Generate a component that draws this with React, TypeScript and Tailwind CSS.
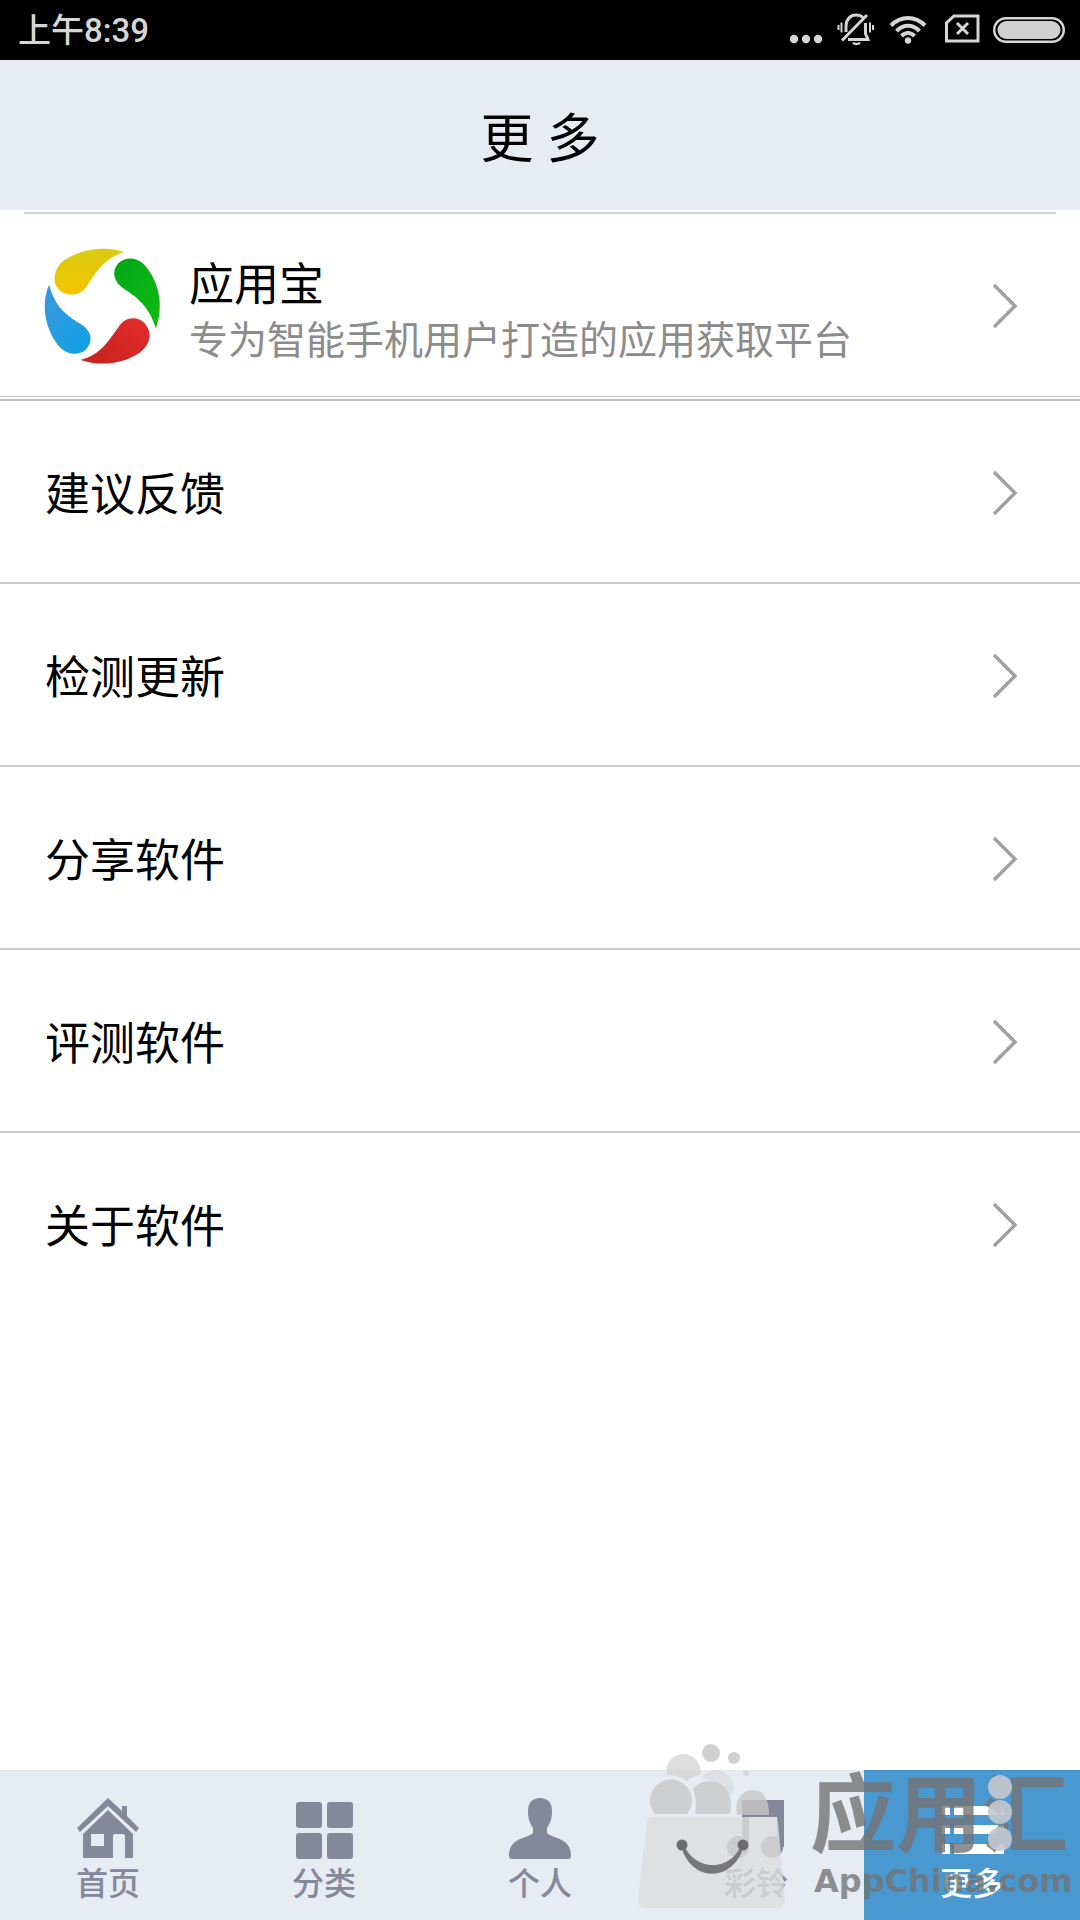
import type { ReactNode } from 'react';

const rows = ['建议反馈', '检测更新', '分享软件', '评测软件', '关于软件'];

function Chevron() {
  return (
    <svg viewBox="0 0 26 46" className="h-[46px] w-[26px] shrink-0" fill="none" stroke="#a0a0a0" strokeWidth="3.4" aria-hidden="true">
      <path d="M2 3 L23 24 L2 45" />
    </svg>
  );
}

function StatusBar() {
  return (
    <div className="flex h-[60px] items-center justify-between bg-black pr-[14px] pl-[18px] text-[#d6d6d6]">
      <span className="text-[33px] leading-none font-medium">上午8:39</span>
      <svg viewBox="0 0 278 34" className="h-[34px] w-[278px]" fill="none" stroke="#d6d6d6" aria-hidden="true">
        <g fill="#d6d6d6" stroke="none">
          <circle cx="6" cy="26" r="4.2" />
          <circle cx="18" cy="26" r="4.2" />
          <circle cx="30" cy="26" r="4.2" />
        </g>
        <g strokeWidth="3">
          <path d="M58 19V13C58 6 63 2 68 2c3 0 5.500 1 7 2.500M77.500 10v10c0 3 2 4 2.500 6.500H60" />
          <path d="M54 27.500L79 2" />
          <path d="M53.500 9.500v10M82 9.500v10" strokeWidth="2" />
          <path d="M50.500 12v5M85 12v5" strokeWidth="2" />
          <path d="M65 29.500c1 2 6 2 7 0" strokeWidth="2.400" />
        </g>
        <g strokeWidth="4">
          <path d="M103 12.500c10-10 24-10 34 0" />
          <path d="M108.500 18c7-7 16-7 23 0" />
          <path d="M113.500 23c4-4 9-4 13 0" />
        </g>
        <circle cx="120" cy="27.500" r="3.200" fill="#d6d6d6" stroke="none" />
        <path d="M166 3h24v25h-31.500V10z" strokeWidth="3" />
        <path d="M169 10l11 11M180 10l-11 11" strokeWidth="3" />
        <rect x="206.200" y="5.200" width="69.600" height="23.600" rx="11.800" strokeWidth="2.400" />
        <rect x="209.500" y="8" width="63" height="18" rx="9" fill="#d0d0d0" stroke="none" />
      </svg>
    </div>
  );
}

function AppLogo() {
  return (
    <svg viewBox="1 -1 112 112" className="size-[114px] shrink-0 overflow-visible" aria-hidden="true">
      <defs>
        <linearGradient id="yellow" x1="0" y1="0" x2="0" y2="1">
          <stop offset="0" stopColor="#d8cc10" />
          <stop offset="1" stopColor="#f4c400" />
        </linearGradient>
        <linearGradient id="green" x1="0" y1="0" x2="1" y2="1">
          <stop offset="0" stopColor="#00a818" />
          <stop offset="1" stopColor="#10bc10" />
        </linearGradient>
        <linearGradient id="red" x1="0" y1="1" x2="1" y2="0">
          <stop offset="0" stopColor="#c82020" />
          <stop offset="1" stopColor="#e42c2c" />
        </linearGradient>
        <linearGradient id="blue" x1="0" y1="0" x2="1" y2="1">
          <stop offset="0" stopColor="#3c98dc" />
          <stop offset="1" stopColor="#10a0e4" />
        </linearGradient>
      </defs>
      <path fill="url(#yellow)" d="M79 3C62-3 38-1 20 11C10 18 8 31 13 38C20 47 34 47 41 38C51 24 57 10 79 3Z" />
      <path fill="url(#green)" d="M110 78C103 56 92 48 80 40C68 33 66 22 73 14C80 7 92 8 99 16C113 32 118 55 110 78Z" />
      <path fill="url(#red)" d="M36 109C57 103 63 90 73 77C79 67 91 65 99 73C107 83 105 93 94 102C76 114 54 115 36 109Z" />
      <path fill="url(#blue)" d="M5 35C11 57 22 65 35 73C47 80 49 91 41 99C34 105 23 104 16 97C2 81-4 56 5 35Z" />
    </svg>
  );
}

function Tab({ label, active, children }: { label: string; active?: boolean; children: ReactNode }) {
  return (
    <a
      href="#"
      aria-current={active ? 'page' : undefined}
      className={`flex flex-1 flex-col items-center border-t-2 pt-6 ${
        active ? 'border-[#4c8fc0] bg-[#4a98d0] text-white' : 'border-[#e9e9e9] text-[#85889a]'
      }`}
    >
      <svg viewBox="0 0 64 64" className="size-16" fill="currentColor" aria-hidden="true">
        {children}
      </svg>
      <span className="mt-[6px] text-[32px] leading-9 font-medium">{label}</span>
    </a>
  );
}

function Watermark() {
  return (
    <div className="pointer-events-none absolute right-0 bottom-0" aria-hidden="true">
      <svg viewBox="630 1740 450 180" className="h-[180px] w-[450px]">
        <g fill="#d4d4d4" fillOpacity="0.8">
          <path d="M667 1775a17 17 0 1 1 33 0c-6 1-10 3-13 7-5-5-12-7-20-7Z" />
          <circle cx="711" cy="1753" r="9" fill="#c4c4c4" />
          <circle cx="734" cy="1758" r="6" fill="#c4c4c4" />
          <circle cx="746" cy="1773" r="3" />
          <path d="M702 1778c6-12 29-11 32 10l-4 8c-6-10-15-16-28-18Z" fillOpacity="0.5" />
          <path d="M655 1814a21 21 0 1 1 32 0Z" fill="#c8c8c8" />
          <path d="M695 1814c2-12 0-20-2-25 4-5 10-8 17-8 17 0 24 18 20 33Z" fill="#c8c8c8" />
          <path d="M737 1815c-3-14 4-25 16-25 10 0 16 8 16 25Z" fill="#c8c8c8" />
        </g>
        <path
          d="M652 1817H772q5 0 6 5L785 1900q0 8-8 8H646q-8 0-8-8L647 1822q1-5 5-5Z"
          fill="#dddddd"
          fillOpacity="0.8"
        />
        <path d="M682 1844C690 1882 734 1882 743 1844C732 1874 694 1874 682 1844Z" fill="#777" stroke="#777" strokeWidth="2.500" />
        <circle cx="682" cy="1845" r="5.500" fill="#6c6c6c" />
        <circle cx="743" cy="1845" r="5.500" fill="#6c6c6c" />
        <g fill="#737373" fillOpacity="0.8" className="font-bold">
          <text x="810" y="1846" fontSize="86">应用汇</text>
          <text x="814" y="1892" fontSize="32" fontFamily="'DejaVu Sans', sans-serif">AppChina.com</text>
        </g>
        <g fill="#c4c8d0" fillOpacity="0.9">
          <circle cx="1000" cy="1787" r="12" />
          <circle cx="1000" cy="1812" r="12" />
          <circle cx="1000" cy="1839" r="12" />
        </g>
      </svg>
    </div>
  );
}

export default function App() {
  return (
    <div className="relative flex min-h-screen flex-col bg-white font-['Roboto','Noto_Sans_CJK_SC',sans-serif] text-black">
      <StatusBar />
      <header className="flex h-[150px] items-center justify-center border-t-2 border-[#ececec] bg-[#e7ebf2] pt-2">
        <h1 className="text-[53px] leading-none">更 多</h1>
      </header>

      <main className="flex-1 pt-[2px]">
        <div className="mx-6 h-[2px] bg-[#d4d4d4]" />
        <a href="#" className="flex h-[182px] items-center pr-[62px] pl-[45px]">
          <AppLogo />
          <div className="ml-[30px] min-w-0 flex-1 pt-4">
            <h2 className="text-[45px] leading-[56px]">应用宝</h2>
            <p className="text-[39px] leading-[54px] text-[#8c8c8c]">专为智能手机用户打造的应用获取平台</p>
          </div>
          <Chevron />
        </a>
        <div className="h-[5px] border-t border-b-2 border-[#c0c0c0]" />
        <ul className="divide-y-2 divide-[#cbcbcb]">
          {rows.map((row) => (
            <li key={row}>
              <a href="#" className="flex h-[181px] items-center justify-between pr-[62px] pl-[45px] text-[45px]">
                <span className="pt-2">{row}</span>
                <Chevron />
              </a>
            </li>
          ))}
        </ul>
      </main>

      <nav className="flex h-[150px] bg-[#e7ebf2]">
        <Tab label="首页">
          <path d="M32 2L46 15V10h5v10L63 32l-3 4L32 10L4 36l-3-4Z" />
          <path fillRule="evenodd" d="M32 14L57 38V61q0 1-1 1H49V40q0-2-2-2H39q-2 0-2 2V62H8q-1 0-1-1V38ZM15 38v12h13V38Z" />
        </Tab>
        <Tab label="分类">
          <rect x="4" y="6" width="26" height="26" rx="3" />
          <rect x="35" y="6" width="26" height="26" rx="3" />
          <rect x="4" y="37" width="26" height="26" rx="3" />
          <rect x="35" y="37" width="26" height="26" rx="3" />
        </Tab>
        <Tab label="个人">
          <path d="M32 2c8 0 12 5 12 13 0 9-2 12-5 17v5c6 6 24 4 24 23q0 3-3 3H4q-3 0-3-3C1 41 19 43 25 37V32c-3-5-5-8-5-17C20 7 24 2 32 2Z" />
        </Tab>
        <Tab label="彩铃">
          <path d="M18 4H60V51H53V21H25V51H18Z" />
          <circle cx="14" cy="51" r="11" />
          <circle cx="48" cy="51" r="11" />
        </Tab>
        <Tab label="更多" active>
          <path d="M2 10h8v9H2zM14 10h51v9H14zM2 29h8v9H2zM14 29h51v9H14zM2 48h8v10H2zM14 48h51v10H14z" />
        </Tab>
      </nav>
      <Watermark />
    </div>
  );
}
